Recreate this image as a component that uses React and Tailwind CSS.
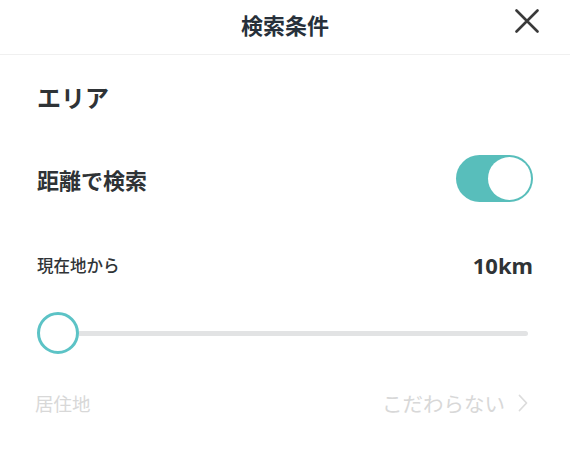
import React from "react";

export default function App() {
  const font = { fontFamily: '"Noto Sans CJK JP", "Noto Sans", sans-serif' };
  return (
    <div className="w-[570px] h-[452px] bg-white overflow-hidden text-[#2f3336]" style={font}>
      <header className="h-[55px] border-b border-[#f0f0f0] grid grid-cols-[1fr_auto_1fr] items-center">
        <div />
        <h1 className="text-[22px] font-bold text-[#27303a] leading-none -mt-[6px]">検索条件</h1>
        <div className="flex justify-end pr-[31px] -mt-[12px]">
          <svg width="24" height="24" viewBox="0 0 24 24">
            <path d="M1.5 1.5 L22.5 22.5 M22.5 1.5 L1.5 22.5" stroke="#3a3a3a" strokeWidth="2.6" strokeLinecap="round" fill="none" />
          </svg>
        </div>
      </header>

      <main className="px-[37px]">
        <h2 className="mt-[24px] h-[36px] flex items-center text-[24px] font-bold leading-none">エリア</h2>

        <div className="mt-[40px] h-[47px] flex items-center justify-between">
          <span className="text-[22px] font-bold leading-none">距離で検索</span>
          <div className="w-[77px] h-[47px] rounded-full bg-[#58bebb] flex items-center justify-end p-[2px]">
            <div className="w-[43px] h-[43px] rounded-full bg-white" />
          </div>
        </div>

        <div className="mt-[48px] h-[30px] flex items-center justify-between">
          <span className="text-[16.5px] font-medium leading-none">現在地から</span>
          <span className="text-[22px] font-bold leading-none" style={{ fontFamily: '"Noto Sans", "Noto Sans CJK JP", sans-serif' }}>10km</span>
        </div>

        <div className="mt-[32px] h-[42px] flex items-center pr-[5px]">
          <div className="w-[42px] h-[42px] rounded-full border-[3px] border-[#5cc3c6] bg-white shrink-0" />
          <div className="flex-1 h-[5px] rounded-r-full bg-[#e2e3e4]" />
        </div>

        <div className="mt-[34px] h-[30px] flex items-center justify-between text-[#d8d8d8]">
          <span className="text-[18.5px] leading-none -ml-[2px]">居住地</span>
          <div className="flex items-center gap-[13px]">
            <span className="text-[20.5px] leading-none">こだわらない</span>
            <svg width="10" height="18" viewBox="0 0 10 18" className="mr-[5px]">
              <polyline points="1.5,1.5 8.5,9 1.5,16.5" stroke="#dcdcdc" strokeWidth="1.8" fill="none" strokeLinecap="round" strokeLinejoin="round" />
            </svg>
          </div>
        </div>
      </main>
    </div>
  );
}
